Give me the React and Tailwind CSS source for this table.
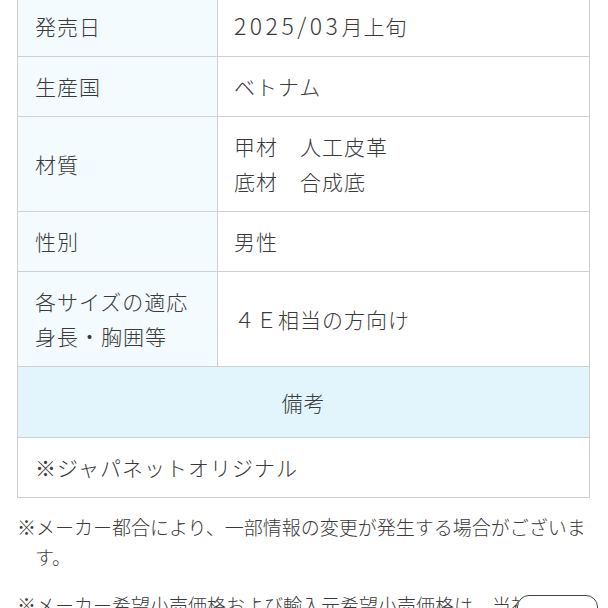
import React from 'react'

const rows = [
  { label: ['発売日'], value: [<><span className="text-[23px] tracking-[3.5px]">2025/03</span>月上旬</>] },
  { label: ['生産国'], value: ['ベトナム'] },
  { label: ['材質'], value: ['甲材　人工皮革', '底材　合成底'] },
  { label: ['性別'], value: ['男性'] },
  { label: ['各サイズの適応', '身長・胸囲等'], value: ['４Ｅ相当の方向け'] },
]

function Lines({ items }) {
  return items.map((t, i) => <div key={i}>{t}</div>)
}

export default function App() {
  return (
    <div
      className="relative w-[608px] h-[608px] overflow-hidden bg-white text-[#3a3a3a] font-light"
      style={{ fontFamily: '"Noto Sans CJK JP", "Noto Sans", sans-serif' }}
    >
      <div className="-mt-[5px] ml-[17px] w-[573px] border border-[#cfcfcf] text-[21px] leading-[35px] tracking-[1px]">
        {rows.map((r, i) => (
          <div key={i} className={`flex ${i > 0 ? 'border-t border-[#cfcfcf]' : ''}`}>
            <div className="w-[200px] shrink-0 flex flex-col justify-center border-r border-[#cfcfcf] bg-[#f3fbfe] py-3 pl-[17px]">
              <Lines items={r.label} />
            </div>
            <div className="flex-1 flex flex-col justify-center py-3 pl-[16px]">
              <Lines items={r.value} />
            </div>
          </div>
        ))}
        <div className="border-t border-[#cfcfcf] bg-[#e3f5fc] py-[17.5px] text-center">備考</div>
        <div className="border-t border-[#cfcfcf] py-3 pl-[17px]">※ジャパネットオリジナル</div>
      </div>

      <div className="ml-[17px] mt-[14px] w-[575px] text-[19px] leading-[30px]">
        <p className="pl-[18px] -indent-[18px]">
          ※メーカー都合により、一部情報の変更が発生する場合がございます。
        </p>
        <p className="mt-[18px] pl-[18px] -indent-[18px]">
          ※メーカー希望小売価格および輸入元希望小売価格は、当社が独自に調査した価格です。
        </p>
      </div>

      <div className="absolute left-[517px] top-[595px] h-[30px] w-[81px] rounded-[12px] border-[1.5px] border-[#444] bg-white" />
    </div>
  )
}
